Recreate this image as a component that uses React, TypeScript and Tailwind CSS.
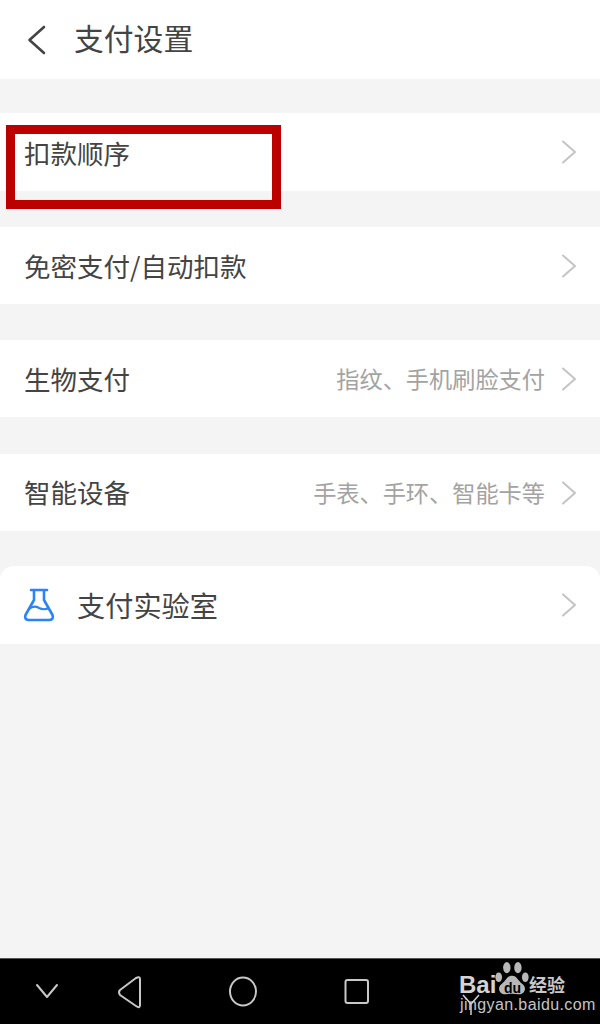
const Chevron = () => (
  <svg width="18" height="26" viewBox="0 0 18 26" fill="none" className="shrink-0">
    <path d="M3 2.5 L15 13 L3 23.5" stroke="#c4c4c4" strokeWidth="2" strokeLinecap="round" strokeLinejoin="round" />
  </svg>
);

function Row({ title, sub, cls = "h-[77px]", textCls = "pt-[2px]" }: { title: string; sub?: string; cls?: string; textCls?: string }) {
  return (
    <div className={`${cls} bg-white flex items-center pl-6 pr-[22px]`}>
      <span className={`text-[26.5px] leading-none text-[#444] ${textCls}`}>{title}</span>
      <div className="ml-auto flex items-center gap-[15px]">
        {sub && <span className="text-[23.2px] leading-none text-[#a3a3a3]">{sub}</span>}
        <Chevron />
      </div>
    </div>
  );
}

export default function App() {
  return (
    <div className="relative w-[600px] h-[1024px] overflow-hidden flex flex-col bg-[#f4f4f4] font-['Noto_Sans_CJK_SC','Noto_Sans',sans-serif]">
      <header className="h-[79px] bg-white flex items-center pl-[25px] shrink-0">
        <svg width="22" height="30" viewBox="0 0 22 30" fill="none">
          <path d="M19 2 L4.500 15 L19 28" stroke="#444" strokeWidth="2.600" strokeLinecap="round" strokeLinejoin="round" />
        </svg>
        <h1 className="ml-[27px] text-[29.8px] leading-none font-normal text-[#444] pb-[3px]">支付设置</h1>
      </header>

      <div className="flex flex-col gap-9 pt-[34px]">
        <Row title="扣款顺序" cls="h-[78px]" />
        <Row title="免密支付/自动扣款" />
        <Row title="生物支付" sub="指纹、手机刷脸支付" />
        <Row title="智能设备" sub="手表、手环、智能卡等" cls="h-[77px] mt-px" textCls="pt-0" />
        <div className="h-[78px] -mt-px bg-white rounded-t-[14px] flex items-center pl-[23px] pr-[22px]">
          <svg width="32" height="34" viewBox="0 0 32 34" fill="none" className="shrink-0">
            <path d="M8 2 H24" stroke="#2a84f4" strokeWidth="2.600" strokeLinecap="round" />
            <path d="M11 2.500 V12 L2.500 27 Q1 31.500 5.500 32 H26.500 Q31 31.500 29.500 27 L21 12 V2.500" stroke="#2a84f4" strokeWidth="2.600" strokeLinejoin="round" />
            <path d="M6 21 Q11 17 16 20 Q21 22.500 26 20" stroke="#2a84f4" strokeWidth="2.200" />
          </svg>
          <span className="ml-[22px] text-[28.2px] leading-none text-[#444]">支付实验室</span>
          <div className="ml-auto"><Chevron /></div>
        </div>
      </div>

      <div className="flex-1" />

      <nav className="h-[66px] bg-black shrink-0 border-t border-[#555]">
        <svg width="600" height="65" viewBox="0 0 600 65" fill="none" stroke="#c8c8c8" strokeWidth="2" strokeLinejoin="round" strokeLinecap="round">
          <path d="M37 26 L47 38 L57 26" />
          <path d="M140 20 V46 Q140 50 136 47 L120 36 Q118 33 120 31 L136 19 Q140 17 140 20 Z" />
          <ellipse cx="243" cy="32.500" rx="13" ry="14" />
          <rect x="345.500" y="21" width="22.500" height="23" rx="2" />
        </svg>
      </nav>

      {/* red annotation box */}
      <div className="absolute left-[6px] top-[125px] w-[275px] h-[84px] border-[9px] border-[#bb0000]" />

      {/* watermark */}
      <div className="absolute left-[459px] top-[962px] w-[135px] h-[56px] text-[#cfcfcf] font-['Liberation_Sans',sans-serif]">
        <span className="absolute left-0 top-[11px] text-[24px] leading-none font-bold text-[#d4d4d4]">Bai</span>
        <svg className="absolute left-[36px] top-[-2px]" width="34" height="36" viewBox="0 0 46 46" fill="#b8b8b8">
          <ellipse cx="5" cy="22" rx="4.500" ry="6.500" />
          <ellipse cx="16" cy="9" rx="5" ry="7.500" />
          <ellipse cx="31" cy="9" rx="5" ry="7.500" />
          <ellipse cx="41" cy="22" rx="4.500" ry="6.500" />
          <path d="M23 20 C30 20 31 27 37 31 C44 36 40 46 31 45 C26 44 20 44 15 45 C6 46 2 36 9 31 C15 27 16 20 23 20 Z" />
        </svg>
        <span className="absolute left-[45px] top-[19px] text-[14px] leading-none font-bold text-black">du</span>
        <span className="absolute left-[70px] top-[13px] text-[18px] leading-none font-bold font-['Noto_Sans_CJK_SC',sans-serif] text-[#c8c8c8]">经验</span>
        <span className="absolute left-[1px] top-[35px] text-[16px] tracking-[0.4px] leading-none text-[#c4c4c4] whitespace-nowrap">jingyan.baidu.com</span>
        <svg className="absolute left-[2px] top-[31px]" width="20" height="24" viewBox="0 0 20 24" fill="none" stroke="#d0d0d0" strokeWidth="1.500">
          <path d="M2 2 L10 11 L18 2 M10 11 V22" />
        </svg>
      </div>
    </div>
  );
}
